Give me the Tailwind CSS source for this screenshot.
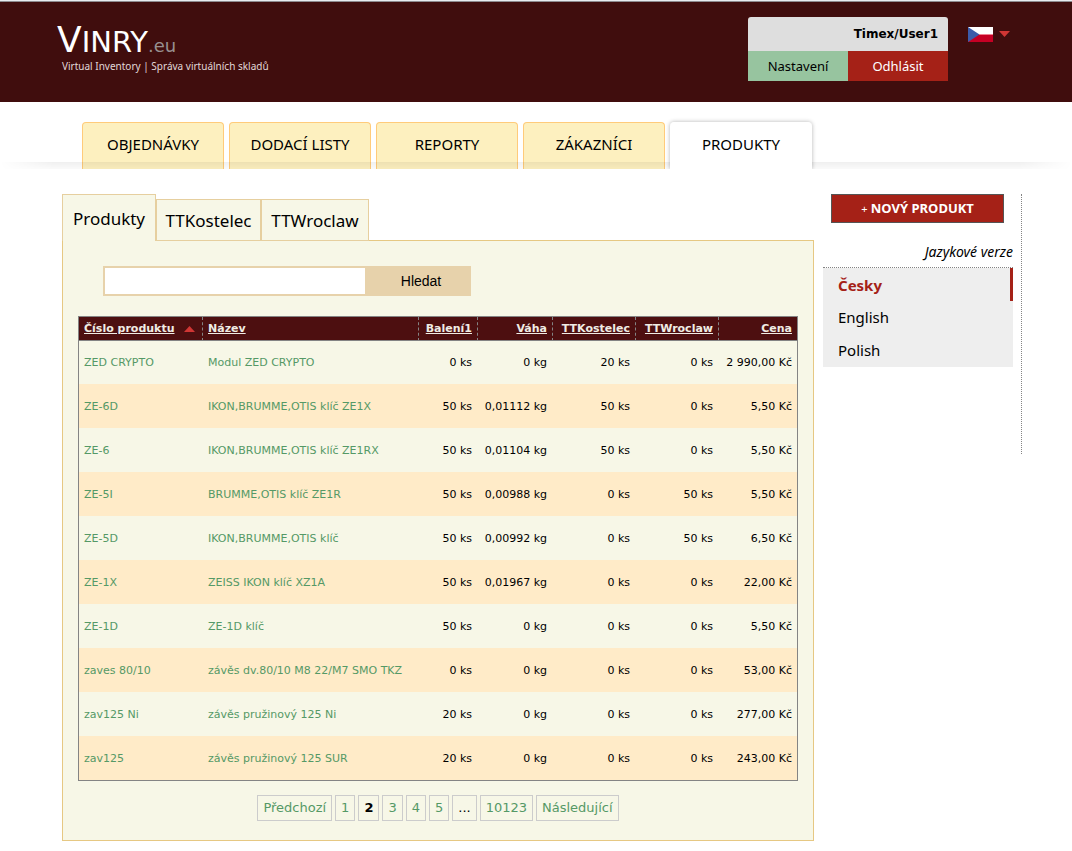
<!DOCTYPE html>
<html lang="cs">
<head>
<meta charset="utf-8">
<title>Vinry.eu – Produkty</title>
<script src="https://cdn.jsdelivr.net/npm/@tailwindcss/browser@4"></script>
</head>
<body class="min-h-screen border-t border-[#e8ecf0] bg-white font-['Noto_Sans','Open_Sans',sans-serif] text-black">
<header class="border-t border-[#8f8c90] bg-[#400d0d]">
  <div class="flex h-[100px] items-start pr-[62px] pl-[57px]">
    <a href="#" class="block pt-5 text-white">
      <span class="flex h-9 items-baseline font-['DejaVu_Sans',sans-serif] leading-9"><span class="text-[36px]">V</span><span class="text-[29px]">INRY</span><span class="text-lg text-[#989090]">.eu</span></span>
      <span class="block pl-[5px] text-[10px] leading-4 text-[#e0d8d8]">Virtual Inventory | Správa virtuálních skladů</span>
    </a>
    <div class="mt-[15px] ml-auto w-[200px] overflow-hidden rounded-t-[3px]">
      <div class="h-[34px] bg-[#dedede] pr-[10px] text-right font-['DejaVu_Sans',sans-serif] text-xs leading-[35px] font-bold">Timex/User1</div>
      <div class="grid grid-cols-2 text-center text-[13px] leading-[30px]">
        <a href="#" class="bg-[#97c49f]">Nastavení</a>
        <a href="#" class="bg-[#a52117] text-white">Odhlásit</a>
      </div>
    </div>
    <button type="button" aria-label="Čeština" class="mt-[25px] ml-5 flex items-center gap-[6px]">
      <svg width="25" height="15" viewBox="0 0 25 15"><path fill="#fff" d="M0 0h25v7.500H0z"/><path fill="#c60024" d="M0 7.500h25V15H0z"/><path fill="#f08090" d="M11 7h14v1H11z"/><path fill="#3c5ba9" d="M0 0l11.500 7.500L0 15z"/></svg>
      <svg class="mb-[2px]" width="11" height="6" viewBox="0 0 11 6"><path fill="#d03634" d="M0 0h11L5.500 6z"/></svg>
    </button>
  </div>
</header>

<nav class="relative mt-5 flex gap-[5px] pl-[82px] text-center text-[15px] leading-[42px]">
  <a href="#" class="h-[47px] w-[142px] rounded-t-[4px] border border-b-0 border-[#ffcb7a] bg-[#fdf0bf]">OBJEDNÁVKY</a>
  <a href="#" class="h-[47px] w-[142px] rounded-t-[4px] border border-b-0 border-[#ffcb7a] bg-[#fdf0bf]">DODACÍ LISTY</a>
  <a href="#" class="h-[47px] w-[142px] rounded-t-[4px] border border-b-0 border-[#ffcb7a] bg-[#fdf0bf]">REPORTY</a>
  <a href="#" class="h-[47px] w-[142px] rounded-t-[4px] border border-b-0 border-[#ffcb7a] bg-[#fdf0bf]">ZÁKAZNÍCI</a>
  <a href="#" aria-current="page" class="relative z-10 h-[47px] w-[142px] rounded-t-[4px] border-t border-white bg-white shadow-[0_0_4px_rgba(0,0,0,0.3)]">PRODUKTY</a>
  <span class="pointer-events-none absolute inset-x-0 bottom-0 h-[7px] bg-linear-to-b from-black/6 to-black/2 mask-x-from-95%"></span>
</nav>

<div class="relative z-20 flex items-start bg-white pt-[25px] pr-[50px] pb-[10px] pl-[62px]">
  <main class="min-w-0 flex-1">
    <div class="relative z-10 -mb-px flex items-end text-center text-[17px]">
      <a href="#" aria-current="page" class="h-[47px] w-[94px] border border-b-0 border-[#e6cf9f] bg-[#f7f7e7] leading-[48px]">Produkty</a>
      <a href="#" class="h-[42px] w-[105px] border border-[#e6cf9f] bg-[#f7f7e7] leading-[42px]">TTKostelec</a>
      <a href="#" class="h-[42px] w-[108px] border border-[#e6cf9f] bg-[#f7f7e7] leading-[42px]">TTWroclaw</a>
    </div>
    <section class="border border-[#e6c883] bg-[#f7f7e7] px-[15px] pt-[25px] pb-[19px]">
      <form class="ml-[25px] flex h-[30px] w-[368px]">
        <input type="text" aria-label="Hledat produkt" class="min-w-0 flex-1 border-2 border-r-0 border-[#e7d2ab] bg-white px-2 text-sm outline-none">
        <button type="button" class="w-[106px] bg-[#e7d2ab] pl-[6px] font-['Liberation_Sans',sans-serif] text-sm">Hledat</button>
      </form>
      <table class="mt-5 w-full table-fixed border-separate border-spacing-0 border border-[#848484] font-['DejaVu_Sans',sans-serif] text-[11px]">
        <colgroup><col class="w-[124px]"><col class="w-[216px]"><col class="w-[59px]"><col class="w-[75px]"><col class="w-[83px]"><col class="w-[83px]"><col class="w-[78px]"></colgroup>
        <thead class="bg-[#4d0f10] text-right text-[#f0ece4]">
          <tr class="h-6 whitespace-nowrap">
            <th class="border-r border-b border-[#848484] pt-[2px] pl-[5px] text-left [border-right-style:dashed]"><a href="#" class="underline">Číslo produktu</a><svg class="ml-[9px] inline-block align-baseline" width="11" height="6" viewBox="0 0 11 6"><path fill="#d03634" d="M0 6h11L5.500 0z"/></svg></th>
            <th class="border-r border-b border-[#848484] pt-[2px] pl-[5px] text-left [border-right-style:dashed]"><a href="#" class="underline">Název</a></th>
            <th class="border-r border-b border-[#848484] pt-[2px] pr-[5px] [border-right-style:dashed]"><a href="#" class="underline">Balení1</a></th>
            <th class="border-r border-b border-[#848484] pt-[2px] pr-[5px] [border-right-style:dashed]"><a href="#" class="underline">Váha</a></th>
            <th class="border-r border-b border-[#848484] pt-[2px] pr-[5px] [border-right-style:dashed]"><a href="#" class="underline">TTKostelec</a></th>
            <th class="border-r border-b border-[#848484] pt-[2px] pr-[5px] [border-right-style:dashed]"><a href="#" class="underline">TTWroclaw</a></th>
            <th class="border-b border-[#848484] pt-[2px] pr-[5px]"><a href="#" class="underline">Cena</a></th>
          </tr>
        </thead>
        <tbody id="rows"></tbody>
      </table>
      <nav aria-label="Stránkování" class="mt-[14px] flex justify-center gap-[3px] font-['DejaVu_Sans',sans-serif] text-[13px] leading-6 text-[#559966]">
        <a href="#" class="border border-[#cccccc] px-[5px]">Předchozí</a>
        <a href="#" class="border border-[#cccccc] px-[5px]">1</a>
        <span aria-current="page" class="border border-[#cccccc] px-[5px] font-bold text-black">2</span>
        <a href="#" class="border border-[#cccccc] px-[5px]">3</a>
        <a href="#" class="border border-[#cccccc] px-[5px]">4</a>
        <a href="#" class="border border-[#cccccc] px-[5px]">5</a>
        <span class="border border-[#cccccc] px-[5px] text-black">...</span>
        <a href="#" class="border border-[#cccccc] px-[5px]">10123</a>
        <a href="#" class="border border-[#cccccc] px-[5px]">Následující</a>
      </nav>
    </section>
  </main>

  <aside class="ml-[9px] min-h-[260px] w-[199px] border-r border-dotted border-[#848484] pr-2">
    <a href="#" class="mr-[9px] ml-2 block border border-[#555555] bg-[#a52117] text-center text-[13px] leading-[27px] font-bold text-white"><span class="text-[11px] font-normal">+</span> NOVÝ PRODUKT</a>
    <h2 class="mt-[19px] border-b border-dotted border-[#848484] pb-[5px] text-right text-sm leading-5 italic">Jazykové verze</h2>
    <ul class="bg-[#eeeeee] text-[15px] leading-[33px]">
      <li><a href="#" class="block border-r-3 border-[#a52117] pt-px pl-[15px] leading-8 font-bold text-[#a52117]">Česky</a></li>
      <li><a href="#" class="block pl-[15px]">English</a></li>
      <li><a href="#" class="block pl-[15px]">Polish</a></li>
    </ul>
  </aside>
</div>
<script>
const rows = [
  ["ZED CRYPTO", "Modul ZED CRYPTO", "0 ks", "0 kg", "20 ks", "0 ks", "2 990,00 Kč"],
  ["ZE-6D", "IKON,BRUMME,OTIS klíč ZE1X", "50 ks", "0,01112 kg", "50 ks", "0 ks", "5,50 Kč"],
  ["ZE-6", "IKON,BRUMME,OTIS klíč ZE1RX", "50 ks", "0,01104 kg", "50 ks", "0 ks", "5,50 Kč"],
  ["ZE-5I", "BRUMME,OTIS klíč ZE1R", "50 ks", "0,00988 kg", "0 ks", "50 ks", "5,50 Kč"],
  ["ZE-5D", "IKON,BRUMME,OTIS klíč", "50 ks", "0,00992 kg", "0 ks", "50 ks", "6,50 Kč"],
  ["ZE-1X", "ZEISS IKON klíč XZ1A", "50 ks", "0,01967 kg", "0 ks", "0 ks", "22,00 Kč"],
  ["ZE-1D", "ZE-1D klíč", "50 ks", "0 kg", "0 ks", "0 ks", "5,50 Kč"],
  ["zaves 80/10", "závěs dv.80/10 M8 22/M7 SMO TKZ", "0 ks", "0 kg", "0 ks", "0 ks", "53,00 Kč"],
  ["zav125 Ni", "závěs pružinový 125 Ni", "20 ks", "0 kg", "0 ks", "0 ks", "277,00 Kč"],
  ["zav125", "závěs pružinový 125 SUR", "20 ks", "0 kg", "0 ks", "0 ks", "243,00 Kč"]
];
document.getElementById("rows").innerHTML = rows.map(r =>
  '<tr class="h-11 whitespace-nowrap first:h-[43px] even:bg-[#ffebc8]">' + r.map((c, i) => i < 2
    ? '<td class="pt-[2px] pl-[5px] text-left text-[#559966]"><a href="#">' + c + '</a></td>'
    : '<td class="pt-[2px] pr-[6px] text-right last:pr-[5px]">' + c + '</td>').join("") + '</tr>').join("");
</script>
</body>
</html>
